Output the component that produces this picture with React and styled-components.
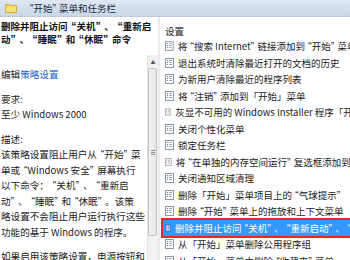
import React from "react";
import styled, { createGlobalStyle } from "styled-components";

const GlobalStyle = createGlobalStyle`
  html, body {
    margin: 0;
    padding: 0;
    background: #fff;
  }
`;

const Page = styled.div`
  width: 350px;
  height: 260px;
  overflow: hidden;
  background: #fff;
  display: flex;
  flex-direction: column;
  font-family: "Noto Sans CJK SC", "Noto Sans", sans-serif;
  font-size: 9.5px;
  color: #1b1b1b;
  --qw: 1em;
`;

const TitleBar = styled.div`
  height: 17px;
  flex-shrink: 0;
  display: flex;
  align-items: center;
  gap: 10px;
  padding-left: 5px;
  background: linear-gradient(#dfe8f3, #c9d7e8);
  border-bottom: 1px solid #bccadb;
  box-sizing: border-box;
  color: #1e2a3a;
  --qw: 0.62em;
`;

const Body = styled.div`
  flex: 1;
  min-height: 0;
  display: flex;
`;

const LeftCol = styled.div`
  width: 158px;
  flex-shrink: 0;
  display: flex;
  flex-direction: column;
`;

const Heading = styled.div`
  height: 38px;
  flex-shrink: 0;
  padding: 3px 0 0 1px;
  box-sizing: border-box;
  font-weight: bold;
  line-height: 13px;
  white-space: nowrap;
  overflow: hidden;
  color: #111;
  --qw: 0.85em;
`;

const ScrollArea = styled.div`
  flex: 1;
  min-height: 0;
  display: flex;
`;

const Desc = styled.div`
  flex: 1;
  padding: 12px 0 0 1px;
  font-size: 9.6px;
  line-height: 15.5px;
  white-space: nowrap;
  overflow: hidden;
  --qw: 0.7em;
`;

const Para = styled.p`
  margin: 0 0 9px;
`;

const Link = styled.span`
  color: #1a66c9;
`;

/* curly quote in a wide cell, the way the Windows CJK font spaces it */
const Quote = styled.span`
  display: inline-block;
  width: var(--qw);
  font-family: "Liberation Sans", sans-serif;
  font-size: 1.1em;
  line-height: 1;
  text-align: ${({ $close }) => ($close ? "left" : "right")};
`;

const Scrollbar = styled.div`
  width: 11px;
  flex-shrink: 0;
  display: flex;
  flex-direction: column;
  background: #f2f2f2;
  border-left: 1px solid #e3e3e3;
  box-sizing: border-box;
`;

const ArrowBtn = styled.div`
  height: 12px;
  display: flex;
  align-items: center;
  justify-content: center;
  color: #555;
  font-size: 5px;
`;

const Thumb = styled.div`
  height: 166px;
  margin: 1px 1px 0 0;
  border: 1px solid #c4c4c4;
  border-radius: 2px;
  background: linear-gradient(90deg, #f4f4f4, #e6e6e6);
  display: flex;
  align-items: center;
  justify-content: center;
`;

const Grip = styled.div`
  width: 4px;
  height: 5px;
  background: repeating-linear-gradient(#8e8e8e 0 1px, transparent 1px 2px);
`;

const Divider = styled.div`
  width: 2px;
  flex-shrink: 0;
  background: #ebebeb;
`;

const RightCol = styled.div`
  flex: 1;
  min-width: 0;
  padding: 7px 0 0 3px;
  display: flex;
  flex-direction: column;
  --qw: 0.65em;
`;

const ColHeader = styled.div`
  height: 16px;
  display: flex;
  align-items: center;
  padding-left: 2px;
  color: #222;
`;

const Row = styled.div`
  height: 16.5px;
  flex-shrink: 0;
  display: flex;
  align-items: center;
  gap: 4px;
  padding-left: 2px;
  white-space: nowrap;
  box-sizing: border-box;
  background: ${({ $selected }) => ($selected ? "#3399ff" : "transparent")};
  color: ${({ $selected }) => ($selected ? "#fff" : "#1b1b1b")};
  outline: ${({ $selected }) => ($selected ? "2px solid #e8262b" : "none")};
`;

const RowText = styled.span`
  overflow: hidden;
`;

// put the curly quotes into their own cells
const T = ({ children }) => {
  const parts = String(children).split(/([“”])/);
  return parts.map((p, i) =>
    p === "“" || p === "”" ? (
      <Quote key={i} $close={p === "”"}>
        {p}
      </Quote>
    ) : (
      p
    )
  );
};

const DocIcon = ({ selected }) => (
  <svg width="9" height="10" viewBox="0 0 9 10">
    <rect x="0.5" y="0.5" width="8" height="9" fill={selected ? "#cfe4ff" : "#fff"} stroke={selected ? "#1f5fb0" : "#8d96a3"} />
    {[2.5, 4.5, 6.5].map((y) => (
      <g key={y}>
        <line x1="2" y1={y} x2="3" y2={y} stroke={selected ? "#1f5fb0" : "#6f7f96"} />
        <line x1="4" y1={y} x2="7" y2={y} stroke={selected ? "#3b78c6" : "#9aa7b8"} />
      </g>
    ))}
  </svg>
);

const FolderIcon = () => (
  <svg width="12" height="10" viewBox="0 0 12 10">
    <path d="M0.5 1.5 h4 l1 1 h6 v7 h-11 z" fill="#f0cf6a" stroke="#d5aa3c" />
    <rect x="1" y="3.5" width="10" height="5.5" fill="#f7dc86" />
  </svg>
);

const items = [
  "将“搜索 Internet”链接添加到“开始”菜单",
  "退出系统时清除最近打开的文档的历史",
  "为新用户清除最近的程序列表",
  "将“注销”添加到「开始」菜单",
  "灰显不可用的 Windows Installer 程序「开始」菜单快捷方式",
  "关闭个性化菜单",
  "锁定任务栏",
  "将“在单独的内存空间运行”复选框添加到“运行”对话框",
  "关闭通知区域清理",
  "删除「开始」菜单项目上的“气球提示”",
  "删除“开始”菜单上的拖放和上下文菜单",
  "删除并阻止访问“关机”、“重新启动”、“睡眠”和“休眠”命令",
  "从「开始」菜单删除公用程序组",
  "从「开始」菜单中删除“收藏夹”菜单",
];

const SELECTED = 11;

export default function App() {
  return (
    <>
      <GlobalStyle />
      <Page>
        <TitleBar>
          <FolderIcon />
          <span>
            <T>“开始”菜单和任务栏</T>
          </span>
        </TitleBar>
        <Body>
          <LeftCol>
            <Heading>
              <T>删除并阻止访问“关机”、“重新启</T>
              <br />
              <T>动”、“睡眠”和“休眠”命令</T>
            </Heading>
            <ScrollArea>
              <Desc>
                <Para>
                  编辑<Link>策略设置</Link>
                </Para>
                <Para>
                  要求:
                  <br />
                  至少 Windows 2000
                </Para>
                <Para>
                  描述:
                  <br />
                  <T>该策略设置阻止用户从“开始”菜</T>
                  <br />
                  <T>单或“Windows 安全”屏幕执行</T>
                  <br />
                  <T>以下命令：“关机”、“重新启</T>
                  <br />
                  <T>动”、“睡眠”和“休眠”。该策</T>
                  <br />
                  略设置不会阻止用户运行执行这些
                  <br />
                  功能的基于 Windows 的程序。
                </Para>
                <Para>
                  如果启用该策略设置，电源按钮和
                  <br />
                  <T>“关机”、“重新启动”、“睡</T>
                </Para>
              </Desc>
              <Scrollbar>
                <ArrowBtn>▲</ArrowBtn>
                <Thumb>
                  <Grip />
                </Thumb>
              </Scrollbar>
            </ScrollArea>
          </LeftCol>
          <Divider />
          <RightCol>
            <ColHeader>设置</ColHeader>
            {items.map((text, i) => (
              <Row key={i} $selected={i === SELECTED}>
                <DocIcon selected={i === SELECTED} />
                <RowText>
                  <T>{text}</T>
                </RowText>
              </Row>
            ))}
          </RightCol>
        </Body>
      </Page>
    </>
  );
}
